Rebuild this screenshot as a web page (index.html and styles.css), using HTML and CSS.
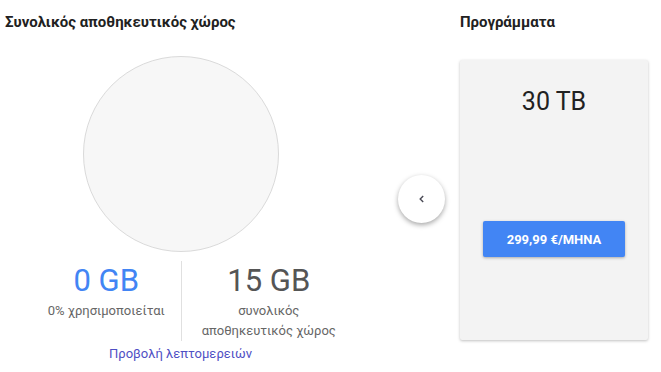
FILE: index.html
```html
<!DOCTYPE html>
<html lang="el">
<head>
  <meta charset="UTF-8">
  <title>Αποθηκευτικός χώρος</title>
  <link rel="stylesheet" href="styles.css">
</head>
<body>
  <div class="page">
    <!-- συνολικός χώρος -->
    <section class="storage">
      <h2>Συνολικός αποθηκευτικός χώρος</h2>
      <div class="chart"></div>
      <div class="stats">
        <div class="stat stat-used">
          <div class="value">0 GB</div>
          <div class="label">0% χρησιμοποιείται</div>
        </div>
        <div class="stat stat-total">
          <div class="value">15 GB</div>
          <div class="label">συνολικός<br>αποθηκευτικός χώρος</div>
        </div>
      </div>
      <a class="details" href="#">Προβολή λεπτομερειών</a>
    </section>

    <!-- προγράμματα -->
    <section class="plans">
      <h2>Προγράμματα</h2>
      <button type="button" class="prev" aria-label="Προηγούμενο">
        <svg width="12" height="12" viewBox="0 0 12 12">
          <path d="M7.2 3 L4.2 6 L7.2 9" fill="none" stroke="#4a4a55" stroke-width="1.4"/>
        </svg>
      </button>
      <div class="plan-card">
        <div class="plan-size">30 TB</div>
        <button type="button" class="plan-buy">299,99 €/MHNA</button>
      </div>
    </section>
  </div>
</body>
</html>
```

FILE: styles.css
```css
* {
  margin: 0;
  padding: 0;
  box-sizing: border-box;
}
body {
  font-family: Roboto, 'Noto Sans', Arial, sans-serif;
  background-color: #fff;
  color: #212121;
}
.page {
  display: flex;
  padding: 12px 13px 0 5px;
}
h2 {
  font-size: 15px;
  font-weight: 700;
  line-height: 20px;
  color: #212121;
}
.storage {
  width: 351px;
  display: flex;
  flex-direction: column;
}
.chart {
  width: 196px;
  height: 196px;
  margin: 24px 0 0 78px;
  border-radius: 50%;
  background-color: #f7f7f7;
  border: 1px solid #dadada;
}
.stats {
  display: grid;
  grid-template-columns: 1fr 1fr;
  margin-top: 9px;
}
.stat {
  text-align: center;
}
.stat-used {
  padding-left: 27px;
}
.stat-total {
  border-left: 1px solid #e0e0e0;
}
.value {
  font-size: 31px;
  line-height: 40px;
  color: #555;
}
.stat-used .value {
  color: #4285f4;
}
.label {
  font-size: 13px;
  line-height: 20px;
  color: #666;
}
.details {
  display: block;
  text-align: center;
  font-size: 13px;
  line-height: 20px;
  margin-top: 3px;
  color: #4f4fc4;
  text-decoration: none;
}
.plans {
  display: grid;
  grid-template-columns: 47px 188px;
  column-gap: 15px;
  align-content: start;
  padding-left: 42px;
}
.plans h2 {
  grid-column: 2;
}
.prev {
  grid-column: 1;
  grid-row: 2;
  align-self: center;
  width: 47px;
  height: 48px;
  margin-top: 26px;
  border: none;
  border-radius: 50%;
  background-color: #fff;
  box-shadow: 0 2px 5px rgba(0,0,0,0.35);
  display: flex;
  align-items: center;
  justify-content: center;
  cursor: pointer;
}
.plan-card {
  grid-column: 2;
  grid-row: 2;
  height: 280px;
  margin-top: 28px;
  background-color: #f3f3f3;
  box-shadow: 0 1px 3px rgba(0,0,0,0.25);
  border-radius: 2px;
  display: flex;
  flex-direction: column;
  align-items: center;
}
.plan-size {
  font-size: 25px;
  line-height: 30px;
  margin-top: 27px;
  color: #212121;
}
.plan-buy {
  width: 142px;
  height: 36px;
  margin-top: 104px;
  border: none;
  border-radius: 2px;
  background-color: #4285f4;
  color: #fff;
  font-family: inherit;
  font-size: 13px;
  font-weight: 700;
  box-shadow: 0 1px 3px rgba(0,0,0,0.3);
  cursor: pointer;
}
```
